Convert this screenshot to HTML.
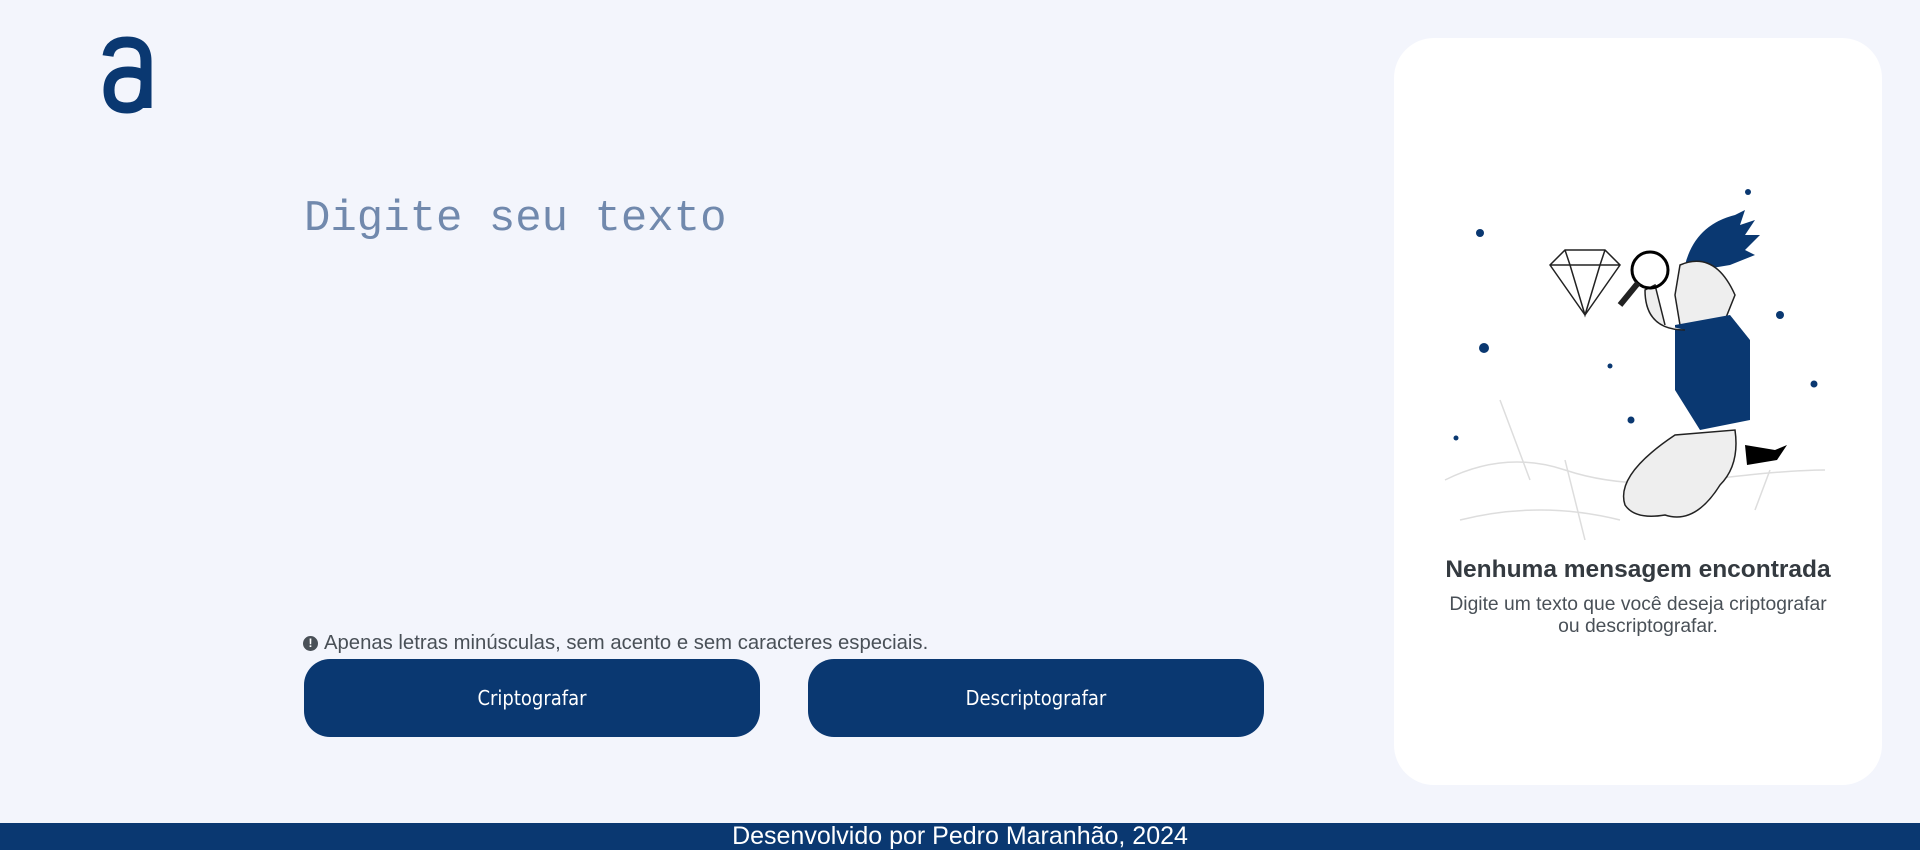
<!DOCTYPE html>
<html><head><meta charset="utf-8"><style>
*{margin:0;padding:0;box-sizing:border-box}
body{width:1920px;height:850px;background:#f3f5fc;position:relative;overflow:hidden;font-family:"Liberation Sans",sans-serif}
.ph{position:absolute;left:304px;top:194px;font:44px "Liberation Mono","DejaVu Sans Mono",monospace;color:#7189ad;white-space:nowrap}
.warn{position:absolute;left:303px;top:632px;font-size:20.3px;color:#495057;display:flex;align-items:center;gap:6px}
.warn i{display:inline-block;width:15px;height:15px;border-radius:50%;background:#495057;color:#fff;font:bold 12px "Liberation Sans";font-style:normal;text-align:center;line-height:15px}
.btn{position:absolute;top:659px;width:456px;height:78px;border-radius:26px;background:#0a3871;color:#fff;font:20px "DejaVu Sans Condensed","Liberation Sans Narrow","Liberation Sans",sans-serif;display:flex;align-items:center;justify-content:center}
.card{position:absolute;left:1394px;top:38px;width:488px;height:747px;border-radius:40px;background:#fff}
.h{position:absolute;left:1394px;width:488px;top:556px;text-align:center;font:bold 24.5px "Liberation Sans",sans-serif;color:#343a40}
.s{position:absolute;left:1394px;width:488px;top:594px;text-align:center;font-size:19.3px;line-height:22px;color:#495057}
.foot{position:absolute;left:0;top:823px;width:1920px;height:27px;background:#0a3871;color:#fff;text-align:center;font-size:25px;line-height:27px}
</style></head><body>
<svg style="position:absolute;left:98px;top:34px" width="60" height="80" viewBox="0 0 60 80">
<path d="M10 22Q12 8 29 8Q48 8 48 27V74M48 45Q44 38 30 38Q11 38 11 56Q11 74 29 74Q48 74 48 50" fill="none" stroke="#0a3871" stroke-width="11"/>
</svg>
<div class="ph">Digite seu texto</div>
<div class="warn"><i>!</i>Apenas letras minúsculas, sem acento e sem caracteres especiais.</div>
<div class="btn" style="left:304px">Criptografar</div>
<div class="btn" style="left:808px">Descriptografar</div>
<div class="card"></div>
<svg style="position:absolute;left:1390px;top:170px" width="460" height="380" viewBox="0 0 460 380">
<g fill="#0a3871"><circle cx="90" cy="63" r="4"/><circle cx="358" cy="22" r="3"/><circle cx="94" cy="178" r="5"/><circle cx="220" cy="196" r="2.5"/><circle cx="390" cy="145" r="4"/><circle cx="424" cy="214" r="3.5"/><circle cx="241" cy="250" r="3.5"/><circle cx="66" cy="268" r="2.5"/></g>
<g fill="none" stroke="#ddd" stroke-width="1.5"><path d="M55 310q60-30 120-10t140 10 120-10"/><path d="M70 350q80-20 160 0"/><path d="M110 230l30 80M175 290l20 80M380 300l-15 40"/></g>
<g fill="none" stroke="#222" stroke-width="1.5"><path d="M160 95l15-15h40l15 15-35 50z M175 80l5 15 15 50 15-50 5-15 M160 95h70"/></g>
<path d="M295 95q10-40 50-50l10-5-5 15 15-5-10 15 15 0-15 15 10 5-25 10-30 5z" fill="#0a3871"/>
<path d="M290 95q35-15 55 30l-10 25-25 10-20-5-5-30z" fill="#eee" stroke="#222" stroke-width="1.5"/>
<path d="M285 155l55-10 20 25 0 80-50 10-25-40z" fill="#0a3871"/>
<path d="M295 160q-40 0-40-40l10-5 10 40" fill="#eee" stroke="#222" stroke-width="1.5"/>
<path d="M285 265q-60 40-50 70 10 15 40 10 30 10 55-30 20-20 15-55z" fill="#eee" stroke="#222" stroke-width="1.5"/>
<path d="M355 275l30 5 12-5-10 15-30 5z" fill="#000"/>
<circle cx="260" cy="100" r="18" fill="none" stroke="#000" stroke-width="3"/>
<path d="M248 113l-18 22" stroke="#222" stroke-width="6"/>
</svg>
<div class="h">Nenhuma mensagem encontrada</div>
<div class="s">Digite um texto que você deseja criptografar<br>ou descriptografar.</div>
<div class="foot">Desenvolvido por Pedro Maranhão, 2024</div>
</body></html>
